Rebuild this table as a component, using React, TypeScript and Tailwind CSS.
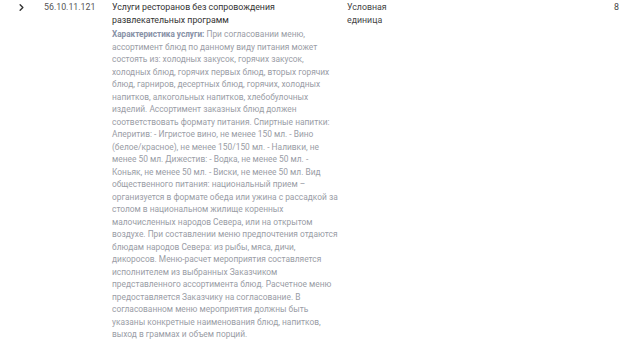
import { ChevronRight } from 'lucide-react';

const description =
  'При согласовании меню, ассортимент блюд по данному виду питания может состоять из: холодных закусок, горячих закусок, холодных блюд, горячих первых блюд, вторых горячих блюд, гарниров, десертных блюд, горячих, холодных напитков, алкогольных напитков, хлебобулочных изделий. Ассортимент заказных блюд должен соответствовать формату питания. Спиртные напитки: Аперитив: - Игристое вино, не менее 150 мл. - Вино (белое/красное), не менее 150/150 мл. - Наливки, не менее 50 мл. Дижестив: - Водка, не менее 50 мл. - Коньяк, не менее 50 мл. - Виски, не менее 50 мл. Вид общественного питания: национальный прием – организуется в формате обеда или ужина с рассадкой за столом в национальном жилище коренных малочисленных народов Севера, или на открытом воздухе. При составлении меню предпочтения отдаются блюдам народов Севера: из рыбы, мяса, дичи, дикоросов. Меню-расчет мероприятия составляется исполнителем из выбранных Заказчиком представленного ассортимента блюд. Расчетное меню предоставляется Заказчику на согласование. В согласованном меню мероприятия должны быть указаны конкретные наименования блюд, напитков, выход в граммах и объем порций.';

export default function App() {
  return (
    <div
      className="w-[620px] h-[347px] overflow-hidden bg-white text-[#3a3a3a]"
      style={{ fontFamily: 'Roboto, "Noto Sans", sans-serif' }}
    >
      <div className="flex items-start pt-[1px]">
        {/* Expand toggle */}
        <div className="w-[44px] flex justify-end pr-[17px] pt-[1px]">
          <ChevronRight className="w-[11px] h-[11px] text-[#333]" strokeWidth={3} />
        </div>

        {/* Code */}
        <div className="w-[68px] text-[8.8px] leading-[13px] text-[#555]">56.10.11.121</div>

        {/* Name + characteristics */}
        <div className="w-[226px]">
          <p className="text-[8.8px] leading-[13px] text-[#333]">
            Услуги ресторанов без сопровождения развлекательных программ
          </p>
          <p className="mt-[1px] text-[8.4px] leading-[12.5px] text-[#9a9da6]">
            <span className="text-[8.2px] font-bold text-[#8791a6]">Характеристика услуги:</span> {description}
          </p>
        </div>

        {/* Unit */}
        <div className="ml-auto w-[267px] text-[8.8px] leading-[13px] text-[#444]">
          Условная
          <br />
          единица
        </div>

        {/* Quantity */}
        <div className="w-[6px] text-[8.8px] leading-[13px] text-[#444]">8</div>
      </div>
    </div>
  );
}
